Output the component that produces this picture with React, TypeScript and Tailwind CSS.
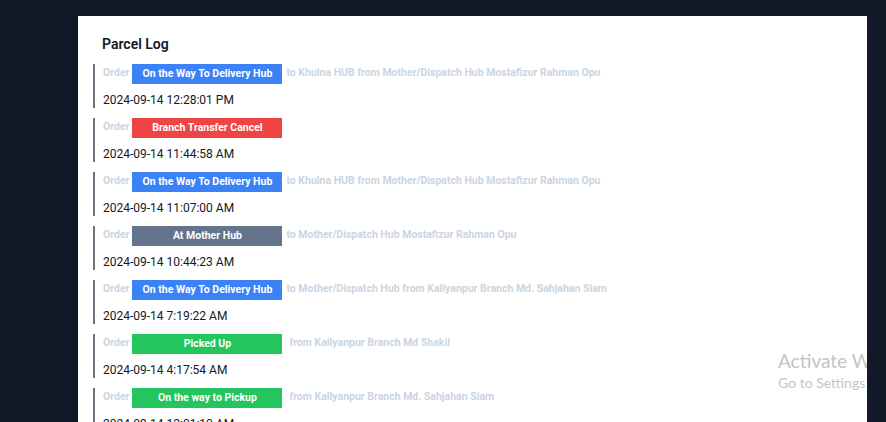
type LogEntry = {
  status: string;
  color: string;
  note: string;
  spaced?: boolean;
  time: string;
};

const entries: LogEntry[] = [
  {
    status: "On the Way To Delivery Hub",
    color: "bg-[#3b82f6]",
    note: "to Khulna HUB from Mother/Dispatch Hub Mostafizur Rahman Opu",
    time: "2024-09-14 12:28:01 PM",
  },
  {
    status: "Branch Transfer Cancel",
    color: "bg-[#ef4444]",
    note: "",
    time: "2024-09-14 11:44:58 AM",
  },
  {
    status: "On the Way To Delivery Hub",
    color: "bg-[#3b82f6]",
    note: "to Khulna HUB from Mother/Dispatch Hub Mostafizur Rahman Opu",
    time: "2024-09-14 11:07:00 AM",
  },
  {
    status: "At Mother Hub",
    color: "bg-[#64748b]",
    note: "to Mother/Dispatch Hub Mostafizur Rahman Opu",
    time: "2024-09-14 10:44:23 AM",
  },
  {
    status: "On the Way To Delivery Hub",
    color: "bg-[#3b82f6]",
    note: "to Mother/Dispatch Hub from Kallyanpur Branch Md. Sahjahan Siam",
    time: "2024-09-14 7:19:22 AM",
  },
  {
    status: "Picked Up",
    color: "bg-[#22c55e]",
    note: "from Kallyanpur Branch Md Shakil",
    spaced: true,
    time: "2024-09-14 4:17:54 AM",
  },
  {
    status: "On the way to Pickup",
    color: "bg-[#22c55e]",
    note: "from Kallyanpur Branch Md. Sahjahan Siam",
    spaced: true,
    time: "2024-09-14 12:01:10 AM",
  },
];

function LogRow({ entry }: { entry: LogEntry }) {
  return (
    <div className="mb-[10px] border-l-2 border-[#6b7280] pl-[8px]">
      <div className="flex items-start h-5">
        <span className="mt-[1px] mr-[3px] text-[10.5px] leading-[16px] font-bold text-[#cbd5e1]">
          Order
        </span>
        <span
          className={`${entry.color} w-[150px] h-5 flex items-center justify-center text-[10.5px] font-bold text-white shrink-0`}
        >
          {entry.status}
        </span>
        {entry.note && (
          <span
            className={`${entry.spaced ? "ml-[7px]" : "ml-1"} mt-[1px] text-[10.5px] leading-[16px] font-bold text-[#cbd5e1] whitespace-nowrap`}
          >
            {entry.note}
          </span>
        )}
      </div>
      <div className="mt-[8px] h-[16px] text-[12px] leading-[16px] text-[#111827]">
        {entry.time}
      </div>
    </div>
  );
}

export default function App() {
  return (
    <div
      className="h-[422px] overflow-hidden bg-[#111827] pt-4 pl-[78px] pr-[19px]"
      style={{ fontFamily: "Roboto, 'Liberation Sans', sans-serif" }}
    >
      <div className="relative h-[420px] overflow-hidden bg-white pt-[18px] pl-[15px]">
        <h2 className="pl-[9px] mb-[10px] text-[14px] leading-[20px] font-semibold text-[#111827]">
          Parcel Log
        </h2>
        {entries.map((e, i) => (
          <LogRow key={i} entry={e} />
        ))}

        {/* windows watermark */}
        <div
          className="absolute left-[700px] top-[332px] whitespace-nowrap text-[#c4c4c4]"
          style={{ fontFamily: "Lato, 'Noto Sans', sans-serif" }}
        >
          <div className="text-[19px] leading-[25px]">Activate Windows</div>
          <div className="text-[14px] leading-[20px]">
            Go to Settings to activate Windows.
          </div>
        </div>
      </div>
    </div>
  );
}
